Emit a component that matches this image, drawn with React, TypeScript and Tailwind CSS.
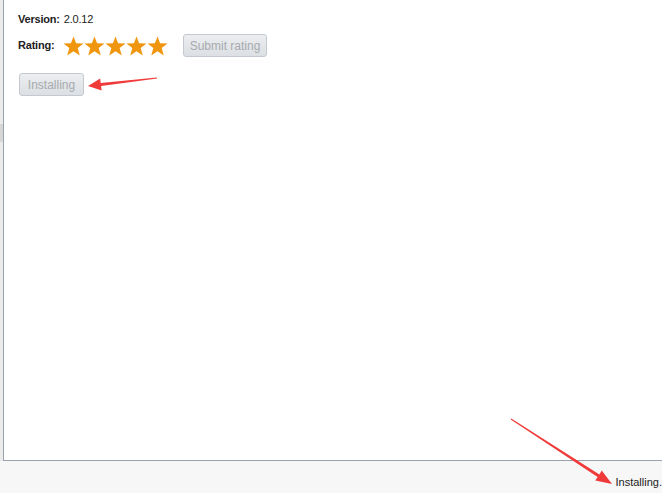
import React from "react";

function Star({ fill = "#f0960e" }: { fill?: string }) {
  return (
    <svg width="21" height="20" viewBox="0 0 24 23" className="block">
      <polygon
        points="12,0.5 15,8.2 23.5,8.6 16.8,13.9 19.2,22.3 12,17.5 4.8,22.3 7.2,13.9 0.5,8.6 9,8.2"
        fill={fill}
      />
    </svg>
  );
}

function Button({ label, className }: { label: string; className?: string }) {
  return (
    <div
      className={
        "h-[23px] flex items-center justify-center rounded-[3px] border border-[#c4c9cf] bg-gradient-to-b from-[#eceef0] to-[#dcdfe3] text-[12px] text-[#a7abaf] " +
        (className ?? "")
      }
    >
      {label}
    </div>
  );
}

export default function App() {
  return (
    <div
      className="relative w-[662px] h-[493px] flex flex-col bg-white overflow-hidden"
      style={{ fontFamily: '"Liberation Sans", Arial, sans-serif' }}
    >
      <div className="flex h-[461px]">
        <div className="w-[3px] bg-[#ebebeb] flex flex-col">
          <div className="h-[124px]" />
          <div className="h-[18px] bg-[#d6d6d6]" />
        </div>
        <div className="flex-1 border-l border-b border-[#9aa3ad] bg-white pl-[14px] pt-[11px]">
          <div className="flex items-center gap-[4px] text-[11px] text-[#222] h-[16px] tracking-[-0.2px]">
            <span className="font-bold">Version:</span>
            <span>2.0.12</span>
          </div>
          <div className="flex items-center mt-[7px] h-[23px]">
            <span className="font-bold text-[11px] text-[#222] w-[45px] tracking-[-0.2px]">Rating:</span>
            <div className="flex">
              <Star />
              <Star />
              <Star />
              <Star />
              <Star />
            </div>
            <Button label="Submit rating" className="ml-[15px] w-[84px]" />
          </div>
          <Button label="Installing" className="mt-[16px] w-[65px] ml-[1px]" />
        </div>
      </div>
      <div className="flex-1 bg-[#f7f7f7] flex items-end justify-end pb-[3px]">
        <span className="text-[11px] text-[#222]">Installing.</span>
      </div>
      <svg className="absolute inset-0 pointer-events-none" width="662" height="493">
        <polygon
          points="156.9,77.5 100.7,83 100.2,78.5 88,86 101.6,90.5 101.1,86 157.1,78.5"
          fill="#f03a3a"
        />
        <polygon
          points="511.3,418.6 599.4,474.4 601.7,470.4 612,484 595.3,480.4 597.6,476.9 510.7,419.4"
          fill="#f03a3a"
        />
      </svg>
    </div>
  );
}
